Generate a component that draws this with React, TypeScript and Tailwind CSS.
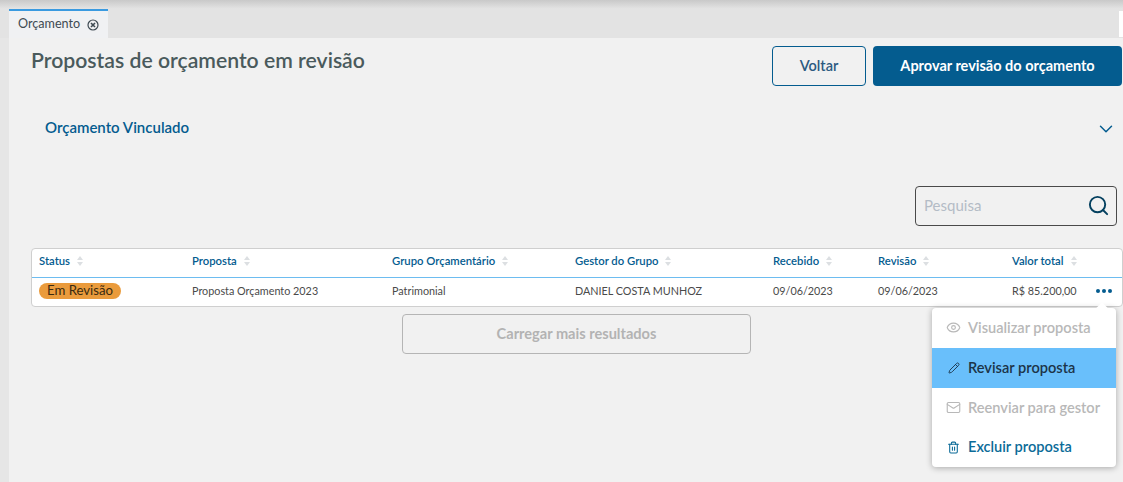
import React from "react";
import { Eye, Pencil, Mail, Trash2, Search, ChevronDown } from "lucide-react";

function SortIcon() {
  return (
    <svg width="6" height="12" viewBox="0 0 6 12" className="ml-[7px] shrink-0 -translate-y-[1px]">
      <path d="M3 1 L6 5 L0 5 Z" fill="#dcdfe2" />
      <path d="M3 11 L6 7 L0 7 Z" fill="#dcdfe2" />
    </svg>
  );
}

const cols = [
  { t: "Status", w: "w-[153px]" },
  { t: "Proposta", w: "w-[200px]" },
  { t: "Grupo Orçamentário", w: "w-[183px]" },
  { t: "Gestor do Grupo", w: "w-[198px]" },
  { t: "Recebido", w: "w-[105px]" },
  { t: "Revisão", w: "w-[134px]" },
  { t: "Valor total", w: "w-[90px]" },
];

function Row({ icon, label, cls }: { icon: React.ReactNode; label: string; cls: string }) {
  return (
    <div className={`flex items-center pb-[1px] pl-[14px] text-[14.6px] font-semibold ${cls}`}>
      <span className="flex w-[22px] justify-start">{icon}</span>
      {label}
    </div>
  );
}

export default function App() {
  return (
    <div className="relative h-[482px] w-[1123px] overflow-hidden bg-[#e6e6e6] font-['Lato','Noto_Sans',sans-serif]">
      <div className="h-[9px] bg-gradient-to-b from-[#c9c9c9] to-[#e4e4e4]" />
      <div className="flex h-[29px] bg-[#e3e3e3] pl-[9px]">
        <div className="flex h-[29px] w-[99px] items-center border-t-2 border-[#3a9ae0] bg-[#f0f1f3] pl-[9px] text-[12.6px] text-[#3e4a52]">
          Orçamento
          <svg width="12" height="12" viewBox="0 0 12 12" className="ml-[7px]" fill="none" stroke="#3e4a52">
            <circle cx="6" cy="6" r="5" strokeWidth="1.2" />
            <path d="M4 4 L8 8 M8 4 L4 8" strokeWidth="1.6" />
          </svg>
        </div>
        <div className="flex-1" />
        <div className="mt-[2px] h-[26px] w-[4px] bg-white" />
      </div>
      <div className="relative ml-[9px] h-[444px] bg-[#f1f1f1] pl-[22px]">
        <div className="flex items-start justify-between pr-[1px]">
          <h1 className="pt-[6px] text-[21.2px] leading-[32px] font-semibold text-[#4a5a5c]">Propostas de orçamento em revisão</h1>
          <div className="mt-[8px] flex gap-[7px]">
            <button className="h-[40px] w-[94px] rounded-[4px] border border-[#045c8f] text-[14.5px] font-semibold text-[#2c5a80]">Voltar</button>
            <button className="h-[40px] w-[249px] rounded-[4px] bg-[#045c8f] text-[14.5px] font-bold text-white">Aprovar revisão do orçamento</button>
          </div>
        </div>
        <div className="mt-[30px] flex h-[22px] items-center justify-between pr-[6px] pl-[14px]">
          <span className="text-[15px] font-semibold text-[#045c8f]">Orçamento Vinculado</span>
          <ChevronDown size={22} strokeWidth={1.6} className="mt-[4px] text-[#045c8f]" />
        </div>
        <div className="mt-[48px] flex justify-end pr-[6px]">
          <div className="flex h-[40px] w-[202px] items-center justify-between rounded-[4px] border border-[#4a4a4a] pr-[6px] pl-[8px] pb-[1px]">
            <span className="text-[15px] text-[#b4bcc6]">Pesquisa</span>
            <Search size={23} strokeWidth={2} className="text-[#04405f]" />
          </div>
        </div>
        <div className="mt-[22px] rounded-[4px] border border-[#cfcfcf] bg-white">
          <div className="flex h-[29px] items-center border-b border-[#6dbcf0] pb-[3px] pl-[7px]">
            {cols.map((c) => (
              <div key={c.t} className={`flex items-center text-[11.3px] font-semibold text-[#045c8f] ${c.w}`}>
                {c.t}
                <SortIcon />
              </div>
            ))}
          </div>
          <div className="flex h-[28px] items-center pb-[1px] pl-[7px] text-[10.8px] text-[#4a4a4a]">
            <div className="w-[153px]">
              <span className="inline-flex h-[16px] w-[82px] items-center justify-center rounded-full bg-[#ea9b3c] text-[13.2px] text-[#3a2a10]">Em Revisão</span>
            </div>
            <div className="w-[200px]">Proposta Orçamento 2023</div>
            <div className="w-[183px]">Patrimonial</div>
            <div className="w-[198px]">DANIEL COSTA MUNHOZ</div>
            <div className="w-[105px]">09/06/2023</div>
            <div className="w-[134px]">09/06/2023</div>
            <div className="w-[84px]">R$ 85.200,00</div>
            <div className="flex -translate-y-[1px] gap-[2px]">
              <span className="h-[4px] w-[4px] rounded-full bg-[#045c8f]" />
              <span className="h-[4px] w-[4px] rounded-full bg-[#045c8f]" />
              <span className="h-[4px] w-[4px] rounded-full bg-[#045c8f]" />
            </div>
          </div>
        </div>
        <button className="mt-[7px] ml-[371px] h-[40px] w-[349px] rounded-[4px] border border-[#b5b5b5] text-[14.6px] font-bold text-[#b3b3b3]">Carregar mais resultados</button>
        <div className="absolute top-[270px] left-[923px] w-[184px] rounded-[4px] bg-white shadow-[0_1px_6px_rgba(0,0,0,0.3)]">
          <div className="absolute -top-[4px] right-[10px] h-[8px] w-[8px] rotate-45 bg-white" />
          <div className="relative grid grid-rows-[40px_40px_40px_39px]">
            <Row cls="text-[#b8b8b8]" label="Visualizar proposta" icon={<Eye size={15} strokeWidth={1.8} />} />
            <Row cls="bg-[#69bffb] text-[#1c3448]" label="Revisar proposta" icon={<Pencil size={12} strokeWidth={1.8} className="ml-[2px]" />} />
            <Row cls="text-[#b8b8b8]" label="Reenviar para gestor" icon={<Mail size={15} strokeWidth={1.8} />} />
            <Row cls="text-[#0b6b98]" label="Excluir proposta" icon={<Trash2 size={13} strokeWidth={2} className="ml-[1px]" />} />
          </div>
        </div>
      </div>
    </div>
  );
}
